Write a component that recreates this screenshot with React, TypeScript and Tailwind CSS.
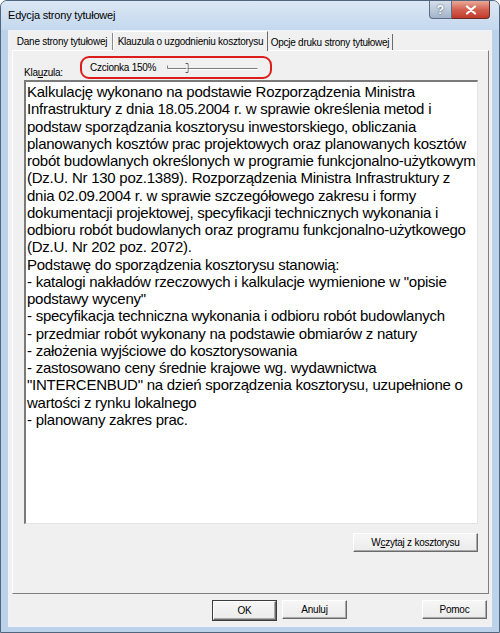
import React from "react";

const lines = [
  "Kalkulację wykonano na podstawie Rozporządzenia Ministra",
  "Infrastruktury z dnia 18.05.2004 r. w sprawie określenia metod i",
  "podstaw sporządzania kosztorysu inwestorskiego, obliczania",
  "planowanych kosztów prac projektowych oraz planowanych kosztów",
  "robót budowlanych określonych w programie funkcjonalno-użytkowym",
  "(Dz.U. Nr 130 poz.1389). Rozporządzenia Ministra Infrastruktury z",
  "dnia 02.09.2004 r. w sprawie szczegółowego zakresu i formy",
  "dokumentacji projektowej, specyfikacji technicznych wykonania i",
  "odbioru robót budowlanych oraz programu funkcjonalno-użytkowego",
  "(Dz.U. Nr 202 poz. 2072).",
  "Podstawę do sporządzenia kosztorysu stanowią:",
  "- katalogi nakładów rzeczowych i kalkulacje wymienione w \"opisie",
  "podstawy wyceny\"",
  "- specyfikacja techniczna wykonania i odbioru robót budowlanych",
  "- przedmiar robót wykonany na podstawie obmiarów z natury",
  "- założenia wyjściowe do kosztorysowania",
  "- zastosowano ceny średnie krajowe wg. wydawnictwa",
  "\"INTERCENBUD\" na dzień sporządzenia kosztorysu, uzupełnione o",
  "wartości z rynku lokalnego",
  "- planowany zakres prac.",
];

function Button({ children, className }: { children: React.ReactNode; className: string }) {
  return (
    <div
      className={
        "h-[19px] flex items-center justify-center bg-gradient-to-b from-[#f6f6f6] to-[#ebebeb] border border-t-white border-l-white border-r-[#6b6b6b] border-b-[#6b6b6b] shadow-[inset_-1px_-1px_0_#a8a8a8] " +
        className
      }
    >
      {children}
    </div>
  );
}

function Slider() {
  return (
    <svg width="92" height="14" viewBox="0 0 92 14">
      <path d="M1.5 4.5v3h90" stroke="#7c7c7c" fill="none" />
      <path d="M2 8.5h90" stroke="#ffffff" fill="none" />
      <path d="M19.5 2.5h2.5v9h-2.5" stroke="#5e5e5e" fill="none" />
      <path d="M21 3.5v7" stroke="#ffffff" fill="none" />
    </svg>
  );
}

export default function App() {
  return (
    <div className="w-[500px] h-[633px] flex flex-col bg-[#bcd2ea] border border-[#52657e] rounded-t-[7px] overflow-hidden font-['Liberation_Sans',Arial,sans-serif] text-black">
      {/* title bar */}
      <div className="h-[29px] flex items-start bg-gradient-to-b from-[#dbe7f4] to-[#c4d8ee]">
        <div className="pl-[7px] pt-[6px] text-[11px] tracking-[-0.2px]">Edycja strony tytułowej</div>
        <div className="ml-auto mr-[9px] flex">
          <div className="w-[23px] h-[18px] flex items-center justify-center rounded-bl-[4px] border border-t-0 border-[#5d6f88] bg-gradient-to-b from-[#d5dfeb] to-[#a3b4c9] text-white text-[12px] font-bold [text-shadow:0_0_2px_#34465e]">
            ?
          </div>
          <div className="w-[38px] h-[18px] flex items-center justify-center rounded-br-[4px] border border-t-0 border-l-0 border-[#6b2a22] bg-gradient-to-b from-[#e9a99a] via-[#d2624f] to-[#c0392b]">
            <svg width="12" height="10" viewBox="0 0 12 10">
              <path d="M2 1.5l8 7M10 1.5l-8 7" stroke="#ffffff" strokeWidth="2.2" strokeLinecap="round" />
            </svg>
          </div>
        </div>
      </div>

      {/* client area */}
      <div className="flex-1 mx-[7px] mb-[5px] flex flex-col bg-[#f0f0f0] border border-[#eef3f9] text-[10px] tracking-[-0.25px]">
        {/* tabs */}
        <div className="h-[19px] flex items-end pl-[3px]">
          <div className="w-[101px] h-[17px] flex items-center justify-center border-r border-[#8a8a8a]">
            Dane strony tytułowej
          </div>
          <div className="w-[155px] h-[20px] -mb-[1px] relative z-10 flex items-center justify-center pb-[1px] bg-[#f0f0f0] border-l border-t border-white border-r border-r-[#6b6b6b]">
            Klauzula o uzgodnieniu kosztorysu
          </div>
          <div className="w-[125px] h-[16px] flex items-center justify-center border-r border-[#6b6b6b]">
            Opcje druku strony tytułowej
          </div>
        </div>

        {/* panel */}
        <div className="w-[477px] h-[544px] ml-[3px] flex flex-col pl-[11px] pr-[10px] pt-[5px] border border-t-white border-l-white border-r-[#7f7f7f] border-b-[#7f7f7f]">
          <div className="h-[24px] flex">
            <div className="w-[56px] pt-[9px]">
              Kla<span className="underline">u</span>zula:
            </div>
            <div className="w-[192px] h-[23px] flex items-center gap-[10px] pl-[8px] border-2 border-[#dd1c1c] rounded-[9px]">
              <span>Czcionka 150%</span>
              <Slider />
            </div>
          </div>
          <div className="w-[454px] h-[444px] overflow-hidden bg-white border-t-2 border-l-2 border-t-[#7a7a7a] border-l-[#7a7a7a] border-r border-b border-r-[#e3e3e3] border-b-[#e3e3e3] pl-[1px] pt-[1px] text-[15px] leading-[17.25px] tracking-[-0.25px]">
            {lines.map((l, i) => (
              <div key={i} className="whitespace-pre">
                {l}
              </div>
            ))}
          </div>
          <div className="flex justify-end mt-[9px]">
            <Button className="w-[125px]">
              <span>
                W<span className="underline">c</span>zytaj z kosztorysu
              </span>
            </Button>
          </div>
        </div>

        {/* bottom buttons */}
        <div className="flex mt-[6px] pl-[203px] pr-[4px]">
          <div className="border border-[#3c3c3c]">
            <Button className="w-[63px] h-[17px]">OK</Button>
          </div>
          <Button className="w-[65px] ml-[5px]">Anuluj</Button>
          <Button className="w-[65px] ml-auto">Pomoc</Button>
        </div>
      </div>
    </div>
  );
}
